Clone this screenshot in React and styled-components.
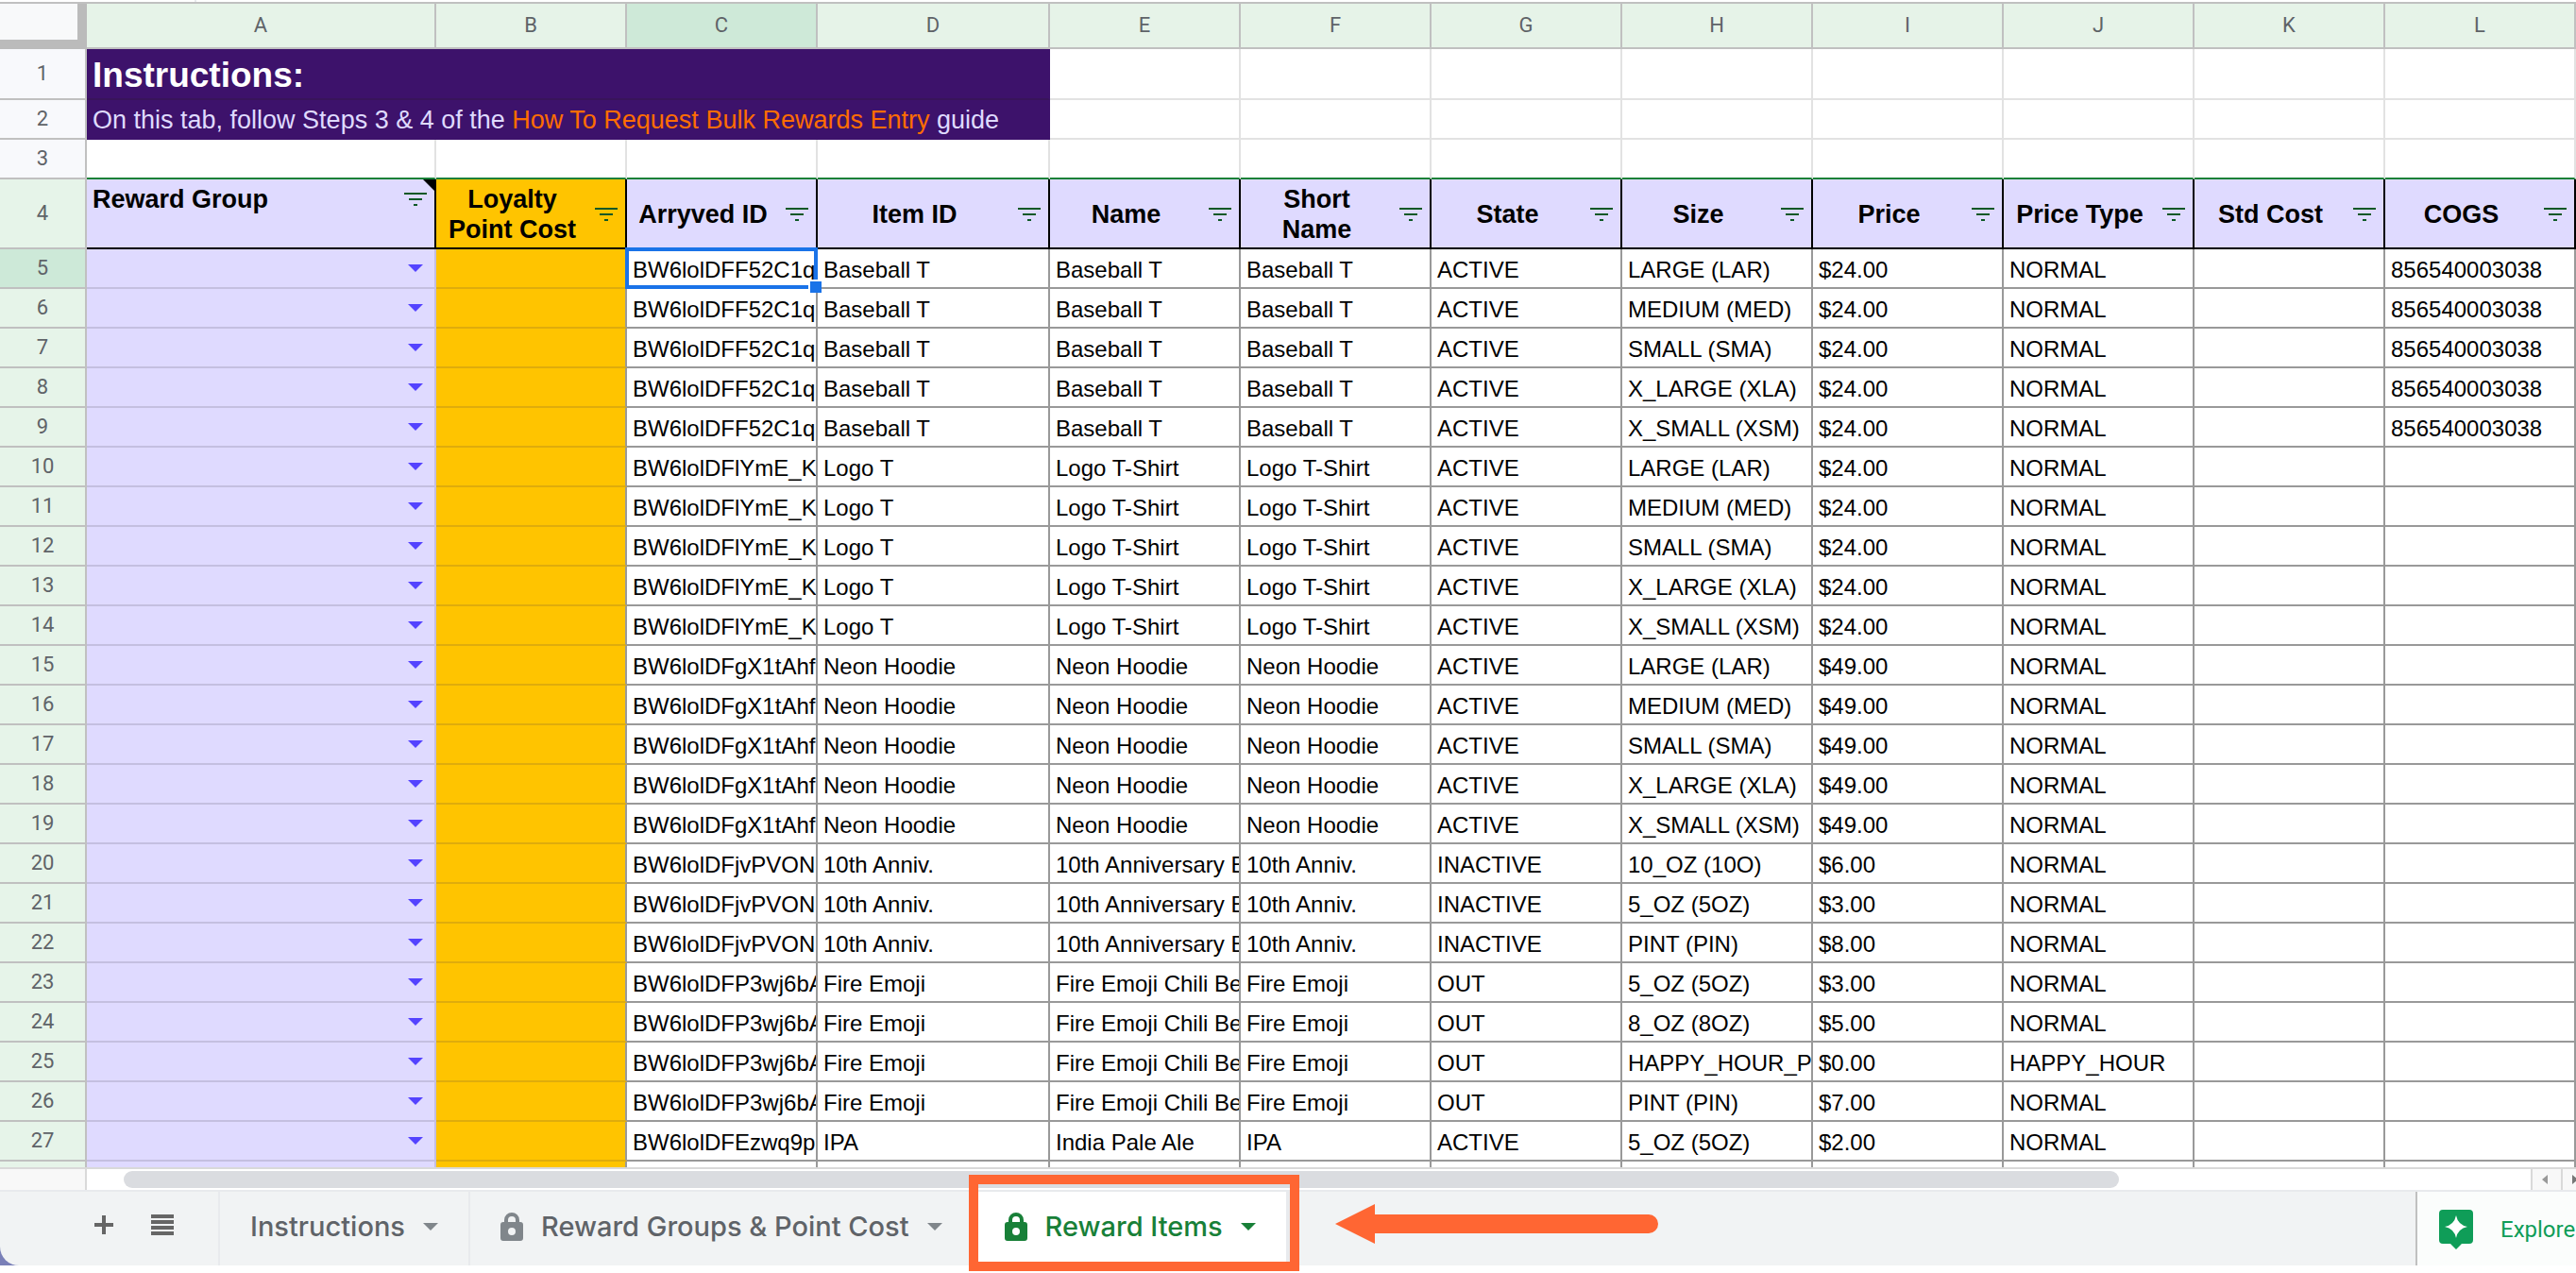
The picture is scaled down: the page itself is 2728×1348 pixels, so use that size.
import React from 'react';
import styled, { createGlobalStyle, css } from 'styled-components';

const GlobalStyle = createGlobalStyle`
  * {
    box-sizing: border-box;
  }
  body {
    margin: 0;
    background: #fff;
  }
`;

const sheetFont = "'Liberation Sans', Arial, sans-serif";
const uiFont = "Roboto, 'Liberation Sans', sans-serif";
const tabFont = "Inter, 'Liberation Sans', sans-serif";

const headerLine = '#c0c0c0';
const gridLine = '#e2e2e2';
const dataLine = '#999';
const lavender = '#dfdaff';
const amber = '#ffc400';
const purple = '#3d126b';
const green = '#188038';
const accent = '#ff6633';

const Page = styled.div`
  display: flex;
  flex-direction: column;
  height: 100vh;
  overflow: hidden;
  padding-bottom: 8px;
`;

const FormulaBar = styled.div`
  display: flex;
  flex: none;
  height: 4px;
  border-bottom: 2px solid ${headerLine};
`;

const NameBox = styled.div`
  width: 208px;
  border-right: 2px solid #e8eaed;
`;

const Sheet = styled.main`
  flex: 1;
  min-height: 0;
  overflow: hidden;
`;

const Table = styled.table`
  width: 100%;
  min-width: 1400px;
  table-layout: fixed;
  border-collapse: separate;
  border-spacing: 0;
  font-family: ${sheetFont};
  font-size: 24px;
  line-height: 28px;
  color: #000;
`;

const Col = styled.col`
  width: ${(p) => (p.$width ? `${p.$width}px` : 'auto')};
`;

const Row = styled.tr`
  height: ${(p) => p.$height || 42}px;
`;

const heading = css`
  padding: 0;
  border-right: 2px solid ${headerLine};
  border-bottom: 2px solid ${headerLine};
  font-family: ${uiFont};
  font-size: 22px;
  line-height: 26px;
  font-weight: 400;
  text-align: center;
  vertical-align: middle;
  color: #5f6368;
`;

const Corner = styled.td`
  padding: 0;
  background: #f8f9fa;
  border-right: 10px solid #bbb;
  border-bottom: 10px solid #bbb;
`;

const ColumnHeading = styled.th`
  ${heading}
  background: ${(p) => (p.$active ? '#cee9d8' : '#e6f3e8')};
`;

const rowTones = {
  plain: '#f8f9fc',
  filtered: '#e6f4e9',
  active: '#cde9d8',
};

const RowHeading = styled.th`
  ${heading}
  background: ${(p) => rowTones[p.$tone]};
`;

const Cell = styled.td`
  padding: 0 0 4px 6px;
  overflow: hidden;
  white-space: nowrap;
  vertical-align: bottom;
  border-right: 2px solid ${(p) => p.$line || dataLine};
  border-bottom: 2px solid ${(p) => p.$line || dataLine};
`;

const BannerCell = styled(Cell)`
  background: ${purple};
  color: ${lavender};
  border-color: ${purple};
  font-size: 27px;
  line-height: 32px;
  padding-bottom: 3px;
`;

const BannerTitle = styled(BannerCell)`
  font-size: 37px;
  line-height: 42px;
  font-weight: 700;
  color: #fff;
  border-bottom-color: #38145a;
`;

const GuideLink = styled.a`
  color: #ff6d01;
  text-decoration: none;
`;

const SpacerCell = styled(Cell)`
  border-bottom-color: ${green};
`;

const FieldHeading = styled.th`
  position: relative;
  padding: 5px 45px 3px 6px;
  background: ${(p) => (p.$amber ? amber : lavender)};
  border-right: 2px solid #000;
  border-bottom: 2px solid #000;
  font-size: 27px;
  line-height: 32px;
  font-weight: 700;
  text-align: ${(p) => (p.$left ? 'left' : 'center')};
  vertical-align: ${(p) => (p.$left ? 'top' : 'middle')};
`;

const FilterButton = styled.button`
  position: absolute;
  right: 8px;
  top: ${(p) => (p.$top ? '14px' : '30px')};
  display: block;
  padding: 0;
  border: 0;
  background: none;
  line-height: 0;
`;

const NoteMark = styled.span`
  position: absolute;
  top: 0;
  right: 0;
  border-top: 12px solid #000;
  border-left: 12px solid transparent;
`;

const GroupCell = styled(Cell)`
  padding: 0 12px 0 0;
  vertical-align: middle;
  background: ${lavender};
  border-color: #c4bfe0;
`;

const GroupButton = styled.button`
  display: block;
  margin-left: auto;
  padding: 0;
  border: 0;
  background: none;
  line-height: 0;
`;

const CostCell = styled(Cell)`
  background: ${amber};
  border-bottom-color: #dfac0c;
`;

const SelectedCell = styled(Cell)`
  position: relative;
  overflow: visible;
`;

const Clip = styled.div`
  overflow: hidden;
`;

const Selection = styled.div`
  position: absolute;
  inset: -2px;
  border: 4px solid #1a73e8;
`;

const FillHandle = styled.div`
  position: absolute;
  right: -6px;
  bottom: -6px;
  width: 14px;
  height: 14px;
  background: #1a73e8;
  border: solid #fff;
  border-width: 2px 0 0 2px;
`;

const ScrollRow = styled.div`
  display: flex;
  flex: none;
  height: 26px;
  background: #fff;
  border-top: 2px solid #d9d9d9;
  border-bottom: 2px solid #e8eaed;
`;

const ScrollCorner = styled.div`
  width: 92px;
  background: #f8f8f8;
  border-right: 2px solid #d9d9d9;
`;

const Track = styled.div`
  flex: 1;
  padding: 2px 436px 2px 39px;
`;

const Thumb = styled.div`
  height: 18px;
  border-radius: 9px;
  background: #dadce0;
`;

const ScrollButton = styled.button`
  flex: none;
  width: ${(p) => p.$width}px;
  overflow: hidden;
  padding: 0 0 0 10px;
  border: 0;
  border-left: 2px solid #d9d9d9;
  background: #f8f8f8;
  line-height: 0;
  text-align: left;
`;

const Backdrop = styled.footer`
  flex: none;
  background: linear-gradient(90deg, #7a80b8 40px, #fff 40px);
`;

const TabBar = styled.div`
  display: flex;
  height: 78px;
  background: #f1f3f4;
  border-bottom-left-radius: 20px;
`;

const Tools = styled.div`
  display: flex;
  align-items: center;
  gap: 39px;
  width: 233px;
  padding: 0 0 8px 99px;
  border-right: 2px solid #e8eaed;
`;

const IconButton = styled.button`
  padding: 0;
  border: 0;
  background: none;
  line-height: 0;
`;

const TabSlot = styled.div`
  position: relative;
  display: flex;
`;

const Tab = styled.button`
  display: flex;
  align-items: center;
  gap: 19px;
  padding: 0 32px 4px 32px;
  border: 0;
  border-right: ${(p) => (p.$active ? 4 : 2)}px solid #e8eaed;
  background: ${(p) => (p.$active ? '#fff' : 'transparent')};
  color: ${(p) => (p.$active ? green : '#5f6368')};
  font-family: ${tabFont};
  font-size: 29px;
  line-height: 32px;
  font-weight: 500;
  white-space: nowrap;
  svg {
    flex: none;
    color: ${(p) => (p.$active ? green : '#80868b')};
  }
`;

const Callout = styled.div`
  position: absolute;
  inset: -18px -10px -6px -6px;
  border: 10px solid ${accent};
  pointer-events: none;
`;

const Pointer = styled.svg`
  flex: none;
  margin: 13px 0 0 48px;
`;

const ExploreButton = styled.button`
  display: flex;
  align-items: center;
  gap: 29px;
  flex: none;
  width: 170px;
  margin-left: auto;
  padding: 2px 0 0 23px;
  overflow: hidden;
  border: 0;
  border-left: 2px solid #c0c0c0;
  background: #fbfdfc;
  color: #0f9d58;
  font-family: ${uiFont};
  font-size: 24px;
  line-height: 28px;
`;

const columns = [
  { letter: 'A', width: 370 },
  { letter: 'B', width: 202 },
  { letter: 'C', width: 202 },
  { letter: 'D', width: 246 },
  { letter: 'E', width: 202 },
  { letter: 'F', width: 202 },
  { letter: 'G', width: 202 },
  { letter: 'H', width: 202 },
  { letter: 'I', width: 202 },
  { letter: 'J', width: 202 },
  { letter: 'K', width: 202 },
  { letter: 'L' },
];

const fields = [
  'Arryved ID',
  'Item ID',
  'Name',
  'Short Name',
  'State',
  'Size',
  'Price',
  'Price Type',
  'Std Cost',
  'COGS',
];

const products = [
  {
    id: 'BW6lolDFF52C1q',
    item: 'Baseball T',
    name: 'Baseball T',
    state: 'ACTIVE',
    cogs: '856540003038',
    sizes: [
      ['LARGE (LAR)', '$24.00'],
      ['MEDIUM (MED)', '$24.00'],
      ['SMALL (SMA)', '$24.00'],
      ['X_LARGE (XLA)', '$24.00'],
      ['X_SMALL (XSM)', '$24.00'],
    ],
  },
  {
    id: 'BW6lolDFlYmE_K',
    item: 'Logo T',
    name: 'Logo T-Shirt',
    short: 'Logo T-Shirt',
    state: 'ACTIVE',
    sizes: [
      ['LARGE (LAR)', '$24.00'],
      ['MEDIUM (MED)', '$24.00'],
      ['SMALL (SMA)', '$24.00'],
      ['X_LARGE (XLA)', '$24.00'],
      ['X_SMALL (XSM)', '$24.00'],
    ],
  },
  {
    id: 'BW6lolDFgX1tAhf',
    item: 'Neon Hoodie',
    name: 'Neon Hoodie',
    state: 'ACTIVE',
    sizes: [
      ['LARGE (LAR)', '$49.00'],
      ['MEDIUM (MED)', '$49.00'],
      ['SMALL (SMA)', '$49.00'],
      ['X_LARGE (XLA)', '$49.00'],
      ['X_SMALL (XSM)', '$49.00'],
    ],
  },
  {
    id: 'BW6lolDFjvPVONl',
    item: '10th Anniv.',
    name: '10th Anniversary B',
    state: 'INACTIVE',
    sizes: [
      ['10_OZ (10O)', '$6.00'],
      ['5_OZ (5OZ)', '$3.00'],
      ['PINT (PIN)', '$8.00'],
    ],
  },
  {
    id: 'BW6lolDFP3wj6bA',
    item: 'Fire Emoji',
    name: 'Fire Emoji Chili Be',
    state: 'OUT',
    sizes: [
      ['5_OZ (5OZ)', '$3.00'],
      ['8_OZ (8OZ)', '$5.00'],
      ['HAPPY_HOUR_PI', '$0.00', 'HAPPY_HOUR'],
      ['PINT (PIN)', '$7.00'],
    ],
  },
  {
    id: 'BW6lolDFEzwq9p',
    item: 'IPA',
    name: 'India Pale Ale',
    state: 'ACTIVE',
    sizes: [['5_OZ (5OZ)', '$2.00']],
  },
];

const rows = products.flatMap((p) =>
  p.sizes.map(([size, price, type = 'NORMAL']) => [
    p.id,
    p.item,
    p.name,
    p.short || p.item,
    p.state,
    size,
    price,
    type,
    '',
    p.cogs || '',
  ])
);

const Filter = ({ label, top }) => (
  <FilterButton type="button" aria-label={`Filter ${label}`} $top={top}>
    <svg width="24" height="14" fill="#0d5826">
      <rect width="24" height="2" />
      <rect x="5" y="6" width="14" height="2" />
      <rect x="10" y="12" width="4" height="2" />
    </svg>
  </FilterButton>
);

const Caret = ({ color = 'currentColor' }) => (
  <svg width="16" height="8" fill={color}>
    <path d="M0 0H16L8 8Z" />
  </svg>
);

const Lock = () => (
  <svg width="24" height="30" viewBox="0 0 24 30">
    <path
      d="M6 12V8A6 6 0 0 1 18 8V12"
      fill="none"
      stroke="currentColor"
      strokeWidth="4"
    />
    <path
      fillRule="evenodd"
      fill="currentColor"
      d="M3 10H21A3 3 0 0 1 24 13V27A3 3 0 0 1 21 30H3A3 3 0 0 1 0 27V13A3 3 0 0 1 3 10ZM12 16A4 4 0 1 0 12 24A4 4 0 1 0 12 16Z"
    />
  </svg>
);

const emptyCells = (count, Part = Cell, line = gridLine) =>
  Array.from({ length: count }, (_, i) => <Part key={i} $line={line} />);

const DataRow = ({ number, values, selected }) => (
  <Row>
    <RowHeading scope="row" $tone={selected ? 'active' : 'filtered'}>
      {number}
    </RowHeading>
    <GroupCell>
      <GroupButton type="button" aria-label={`Reward group for row ${number}`}>
        <Caret color="#5443ff" />
      </GroupButton>
    </GroupCell>
    <CostCell />
    {values.map((value, i) =>
      selected && i === 0 ? (
        <SelectedCell key={i}>
          <Clip>{value}</Clip>
          <Selection />
          <FillHandle />
        </SelectedCell>
      ) : (
        <Cell key={i}>{value}</Cell>
      )
    )}
  </Row>
);

const Grid = () => (
  <Table>
    <colgroup>
      <Col $width={92} />
      {columns.map(({ letter, width }) => (
        <Col key={letter} $width={width} />
      ))}
    </colgroup>
    <thead>
      <Row $height={48}>
        <Corner />
        {columns.map(({ letter }) => (
          <ColumnHeading key={letter} scope="col" $active={letter === 'C'}>
            {letter}
          </ColumnHeading>
        ))}
      </Row>
    </thead>
    <tbody>
      <Row $height={54}>
        <RowHeading scope="row" $tone="plain">
          1
        </RowHeading>
        <BannerTitle colSpan={4}>Instructions:</BannerTitle>
        {emptyCells(8)}
      </Row>
      <Row>
        <RowHeading scope="row" $tone="plain">
          2
        </RowHeading>
        <BannerCell colSpan={4}>
          On this tab, follow Steps 3 &amp; 4 of the{' '}
          <GuideLink href="#guide">
            How To Request Bulk Rewards Entry
          </GuideLink>{' '}
          guide
        </BannerCell>
        {emptyCells(8)}
      </Row>
      <Row>
        <RowHeading scope="row" $tone="plain">
          3
        </RowHeading>
        {emptyCells(12, SpacerCell)}
      </Row>
      <Row $height={74}>
        <RowHeading scope="row" $tone="filtered">
          4
        </RowHeading>
        <FieldHeading $left>
          Reward Group
          <Filter label="Reward Group" top />
          <NoteMark />
        </FieldHeading>
        <FieldHeading $amber>
          Loyalty Point Cost
          <Filter label="Loyalty Point Cost" />
        </FieldHeading>
        {fields.map((field) => (
          <FieldHeading key={field}>
            {field}
            <Filter label={field} />
          </FieldHeading>
        ))}
      </Row>
      {rows.map((values, i) => (
        <DataRow key={i} number={i + 5} values={values} selected={i === 0} />
      ))}
      <Row>
        <RowHeading $tone="filtered" />
        <GroupCell />
        <CostCell />
        {emptyCells(10, Cell, dataLine)}
      </Row>
    </tbody>
  </Table>
);

const Scrollbar = () => (
  <ScrollRow>
    <ScrollCorner />
    <Track>
      <Thumb />
    </Track>
    <ScrollButton type="button" aria-label="Scroll left" $width={32}>
      <svg width="6" height="10" fill="#999">
        <path d="M6 0V10L0 5Z" />
      </svg>
    </ScrollButton>
    <ScrollButton type="button" aria-label="Scroll right" $width={16}>
      <svg width="6" height="10" fill="#777">
        <path d="M0 0V10L6 5Z" />
      </svg>
    </ScrollButton>
  </ScrollRow>
);

const Tabs = () => (
  <Backdrop>
    <TabBar>
      <Tools>
        <IconButton type="button" aria-label="Add sheet">
          <svg width="22" height="20" fill="#666">
            <path d="M9 0H13V8H21V12H13V20H9V12H1V8H9Z" />
          </svg>
        </IconButton>
        <IconButton type="button" aria-label="All sheets">
          <svg width="24" height="22" fill="#666">
            <path d="M0 0H24V4H0ZM0 6H24V10H0ZM0 12H24V16H0ZM0 18H24V22H0Z" />
          </svg>
        </IconButton>
      </Tools>
      <Tab type="button">
        Instructions
        <Caret />
      </Tab>
      <Tab type="button">
        <Lock />
        Reward Groups &amp; Point Cost
        <Caret />
      </Tab>
      <TabSlot>
        <Tab type="button" $active>
          <Lock />
          Reward Items
          <Caret />
        </Tab>
        <Callout />
      </TabSlot>
      <Pointer width="342" height="42" fill={accent}>
        <path d="M0 21L42 0V11H332A10 10 0 0 1 332 31H42V42Z" />
      </Pointer>
      <ExploreButton type="button">
        <svg width="36" height="42" viewBox="0 0 36 42">
          <path
            fill="#0f9d58"
            d="M4 0H32A4 4 0 0 1 36 4V32A4 4 0 0 1 32 36H24L18 42L12 36H4A4 4 0 0 1 0 32V4A4 4 0 0 1 4 0Z"
          />
          <path
            fill="#fff"
            d="M18 6Q20 16 30 18Q20 20 18 30Q16 20 6 18Q16 16 18 6Z"
          />
        </svg>
        Explore
      </ExploreButton>
    </TabBar>
  </Backdrop>
);

export default function App() {
  return (
    <Page>
      <GlobalStyle />
      <FormulaBar>
        <NameBox />
      </FormulaBar>
      <Sheet>
        <Grid />
      </Sheet>
      <Scrollbar />
      <Tabs />
    </Page>
  );
}
